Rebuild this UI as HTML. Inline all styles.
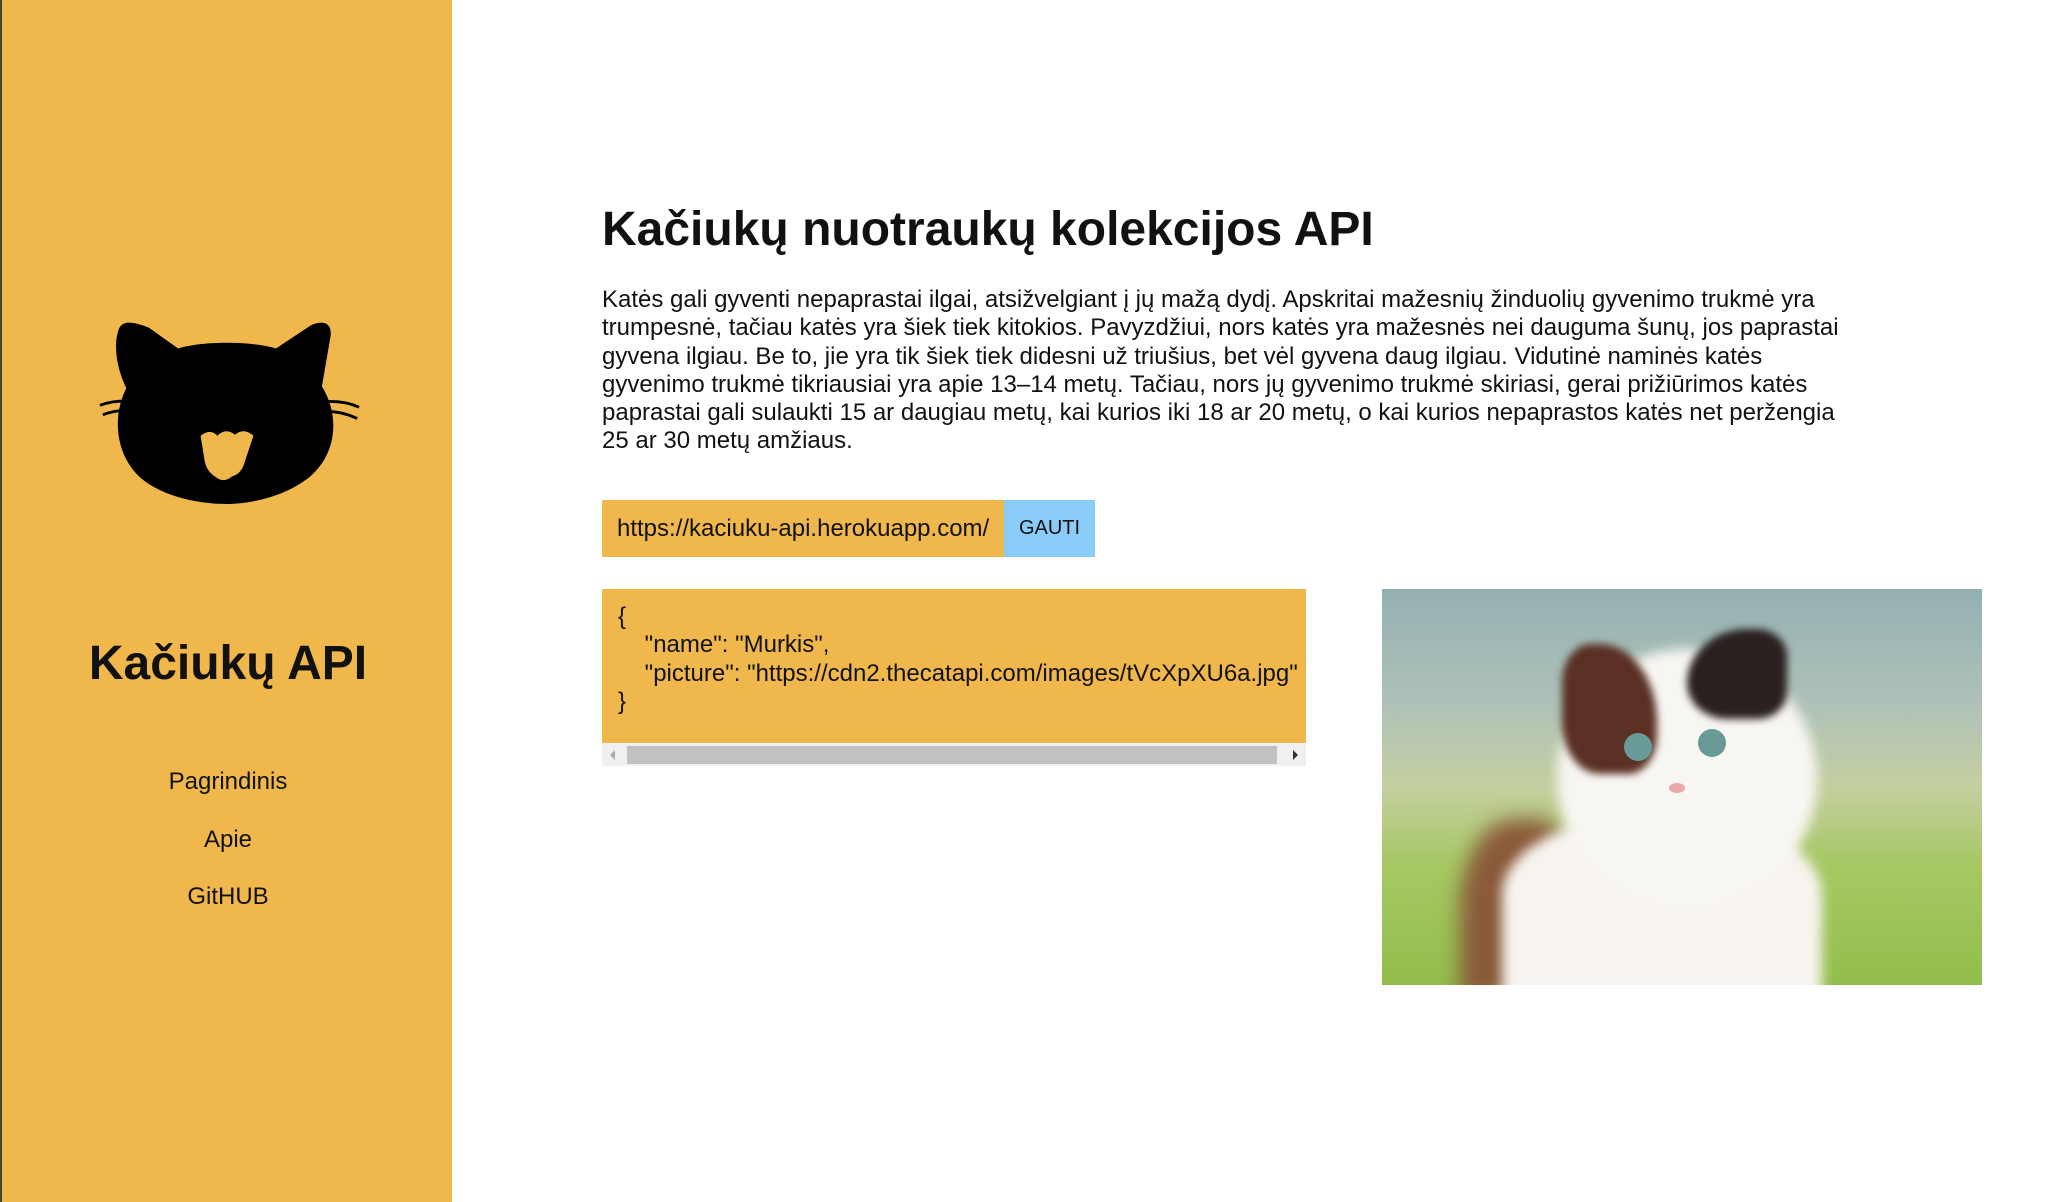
<!DOCTYPE html>
<html><head><meta charset="utf-8"><style>
*{margin:0;padding:0;box-sizing:border-box}
body{width:2045px;height:1202px;background:#fff;font-family:"Liberation Sans",Arial,sans-serif;color:#111;position:relative;overflow:hidden}
.side{position:absolute;left:0;top:0;width:452px;height:1202px;background:#f0b84c;border-left:2px solid #3a4a2a}
.side h2{position:absolute;left:0;width:452px;top:636px;text-align:center;font-size:48px;font-weight:bold}
.nav{position:absolute;left:0;width:452px;text-align:center;font-size:24px}
h1{position:absolute;left:602px;top:202px;font-size:48px;font-weight:bold}
p.t{position:absolute;left:602px;top:286px;width:1245px;font-size:24px;line-height:28.3px}
.url{position:absolute;left:602px;top:500px;width:402px;height:57px;background:#f0b84c;font-size:24px;line-height:57px;padding-left:15px}
.btn{position:absolute;left:1004px;top:500px;width:91px;height:57px;background:#8accf8;font-size:20px;line-height:57px;text-align:center}
.json{position:absolute;left:602px;top:589px;width:704px;height:154px;background:#f0b84c;font-size:24px;line-height:28.3px;padding:14px 0 0 16px;white-space:pre}
.sb{position:absolute;left:602px;top:743px;width:704px;height:23px;background:#f0f0f0}
.thumb{position:absolute;left:25px;top:3px;width:650px;height:18px;background:#c1c1c1}
.photo{position:absolute;left:1382px;top:589px;width:600px;height:396px;overflow:hidden;
background:linear-gradient(180deg,#93b0b2 0%,#b0c2b8 30%,#c4cfa0 50%,#a6c862 70%,#92bd4c 100%)}
.photo div{position:absolute}
</style></head><body>
<div class="side">
<svg style="position:absolute;left:93px;top:320px" width="268" height="184" viewBox="0 0 274 194" preserveAspectRatio="none">
<path d="M25 8 C30 0 40 2 55 8 L85 30 C110 22 160 22 185 30 L220 6 C232 0 242 2 241 16 L232 70 C250 100 248 140 220 165 C190 190 150 194 135 194 C110 194 70 188 45 165 C20 140 18 100 32 72 C22 50 18 25 25 8 Z" fill="#000"/>
<path d="M5 90 Q20 84 40 86 M8 100 Q22 94 40 96 M236 86 Q255 85 270 92 M236 96 Q255 97 268 104" stroke="#000" stroke-width="3" fill="none"/>
<path d="M108 122 Q118 114 125 122 Q134 113 143 121 Q152 113 162 122 L153 150 Q150 162 140 165 Q132 172 124 166 Q114 160 112 148 Z" fill="#f0b84c"/>
</svg>
<h2>Kačiukų API</h2>
<div class="nav" style="top:768px">Pagrindinis</div>
<div class="nav" style="top:826px">Apie</div>
<div class="nav" style="top:883px">GitHUB</div>
</div>
<h1>Kačiukų nuotraukų kolekcijos API</h1>
<p class="t">Katės gali gyventi nepaprastai ilgai, atsižvelgiant į jų mažą dydį. Apskritai mažesnių žinduolių gyvenimo trukmė yra trumpesnė, tačiau katės yra šiek tiek kitokios. Pavyzdžiui, nors katės yra mažesnės nei dauguma šunų, jos paprastai gyvena ilgiau. Be to, jie yra tik šiek tiek didesni už triušius, bet vėl gyvena daug ilgiau. Vidutinė naminės katės gyvenimo trukmė tikriausiai yra apie 13–14 metų. Tačiau, nors jų gyvenimo trukmė skiriasi, gerai prižiūrimos katės paprastai gali sulaukti 15 ar daugiau metų, kai kurios iki 18 ar 20 metų, o kai kurios nepaprastos katės net peržengia 25 ar 30 metų amžiaus.</p>
<div class="url">https://kaciuku-api.herokuapp.com/</div>
<div class="btn">GAUTI</div>
<div class="json">{
    "name": "Murkis",
    "picture": "https://cdn2.thecatapi.com/images/tVcXpXU6a.jpg"
}</div>
<div class="sb"><div class="thumb"></div>
<div style="position:absolute;left:8px;top:7px;border:5px solid transparent;border-right-color:#aaa;border-left:0"></div>
<div style="position:absolute;right:8px;top:7px;border:5px solid transparent;border-left-color:#333;border-right:0"></div></div>
<div class="photo">
<div style="left:78px;top:230px;width:110px;height:180px;background:#8a5a3a;border-radius:50% 30% 0 0;filter:blur(10px)"></div>
<div style="left:120px;top:230px;width:320px;height:190px;background:#f7f4ef;border-radius:40% 40% 5% 5%;filter:blur(6px)"></div>
<div style="left:175px;top:60px;width:260px;height:260px;background:#f8f6f2;border-radius:50%;filter:blur(6px)"></div>
<div style="left:180px;top:55px;width:95px;height:130px;background:#5a3024;border-radius:30% 60% 30% 40%;filter:blur(4px)"></div>
<div style="left:305px;top:40px;width:100px;height:90px;background:#2a2020;border-radius:60% 30% 30% 40%;filter:blur(4px)"></div>
<div style="left:242px;top:144px;width:28px;height:28px;background:#6a9a98;border-radius:50%"></div>
<div style="left:316px;top:140px;width:28px;height:28px;background:#6a9a98;border-radius:50%"></div>
<div style="left:287px;top:194px;width:16px;height:10px;background:#e8a8a8;border-radius:50%"></div>
</div>
</body></html>
